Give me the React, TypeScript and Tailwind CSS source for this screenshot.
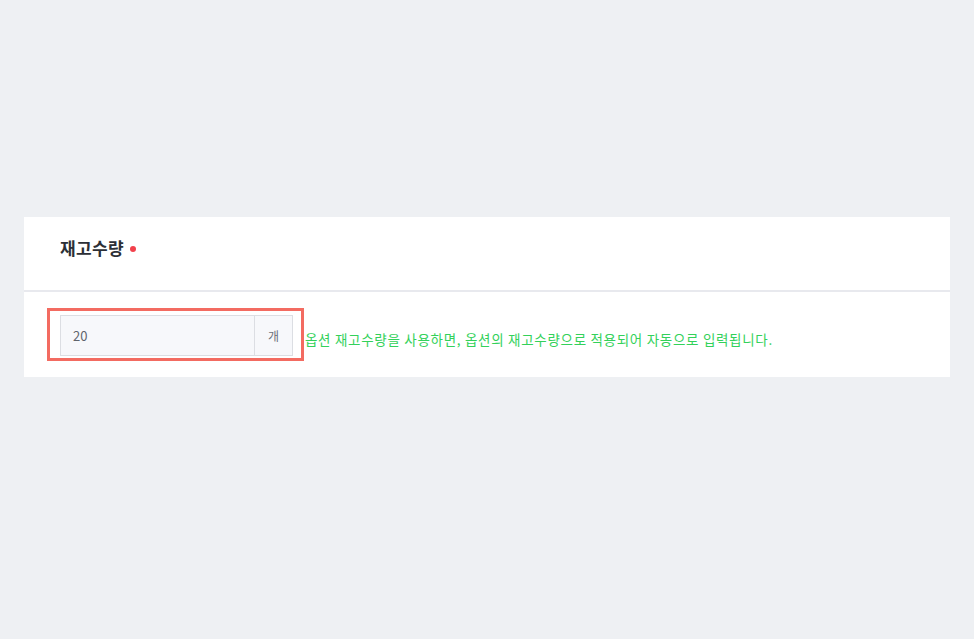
export default function App() {
  return (
    <div
      className="w-[974px] h-[639px] bg-[#eef0f3] pt-[217px] px-[24px]"
      style={{ fontFamily: '"Noto Sans CJK KR", "Noto Sans", sans-serif' }}
    >
      <div className="bg-white">
        <div className="h-[75px] flex items-start pt-[19px] pl-[36px] border-b-2 border-[#e8e9ee]">
          <h2 className="text-[17px] leading-[24px] font-bold text-[#2c2f36] flex items-center tracking-[0.4px]">
            재고수량
            <span className="ml-[6px] mt-[2px] w-[6px] h-[6px] rounded-full bg-[#f2414c]" />
          </h2>
        </div>
        <div className="flex items-center pl-[36px] pt-[23px] pb-[21px]">
          <div className="relative">
            <div className="flex w-[233px] h-[41px] border border-[#dcdee3] bg-[#f7f8fb]">
              <input
                type="text"
                defaultValue="20"
                className="flex-1 min-w-0 bg-transparent pl-[12px] text-[13px] text-[#60646c] outline-none"
              />
              <span className="w-[38px] flex items-center justify-center border-l border-[#dcdee3] text-[12px] text-[#6b7079]">
                개
              </span>
            </div>
            <div className="absolute left-[-13px] top-[-7px] w-[257px] h-[53px] border-[3px] border-[#f36b61] pointer-events-none" />
          </div>
          <p className="ml-[12px] mt-[7px] text-[13.5px] text-[#33d15a] tracking-[0.7px]">
            옵션 재고수량을 사용하면, 옵션의 재고수량으로 적용되어 자동으로 입력됩니다.
          </p>
        </div>
      </div>
    </div>
  );
}
